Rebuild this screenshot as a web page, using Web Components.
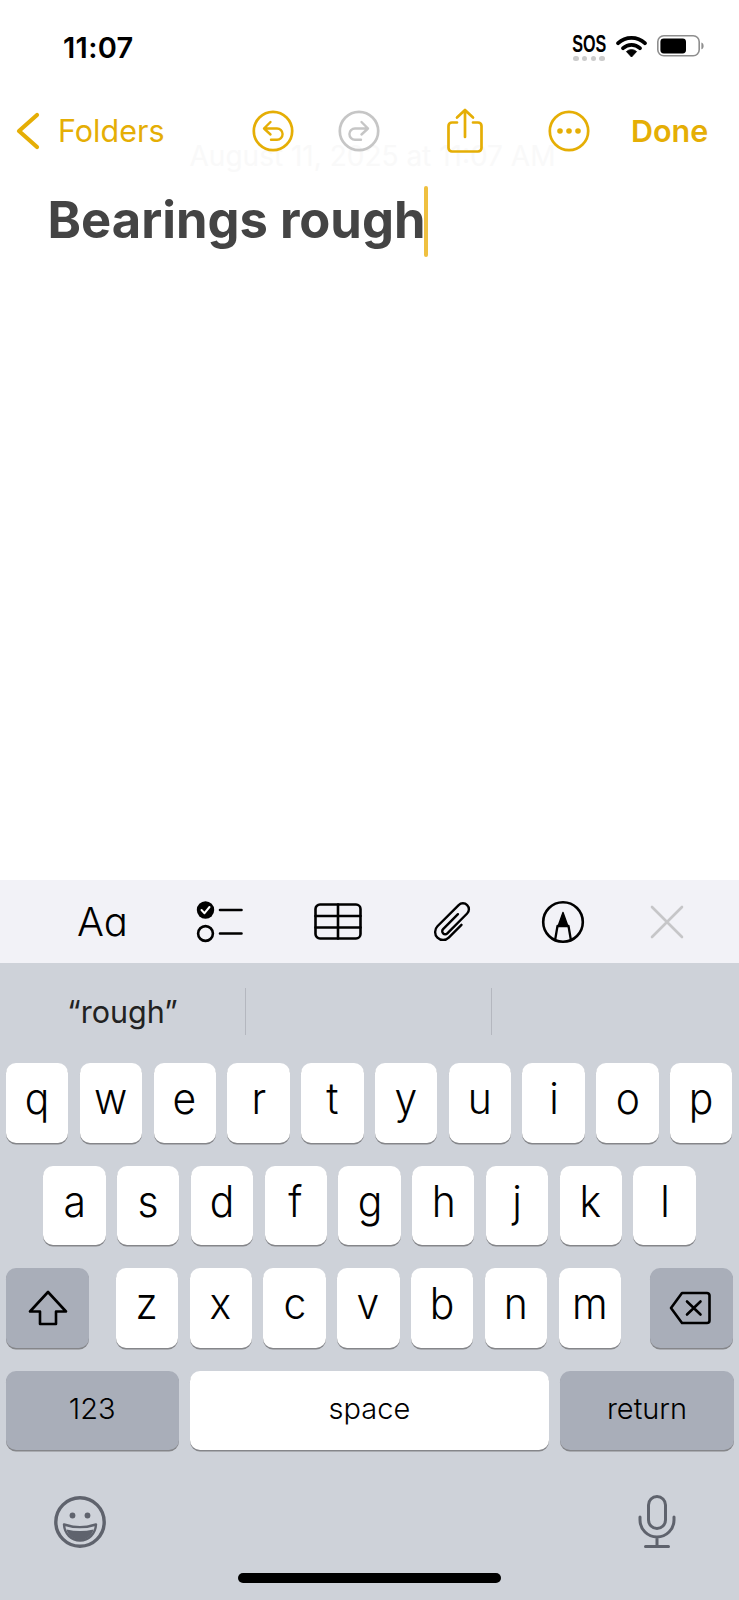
<!DOCTYPE html>
<html lang="en">
<head>
<meta charset="utf-8">
<title>Notes</title>
<style>
  html, body { margin: 0; background: #fff; }
  body { width: 739px; height: 1600px; overflow: hidden; font-family: Inter, "Liberation Sans", sans-serif; }
</style>
</head>
<body>
<notes-screen></notes-screen>

<script>
const ACCENT = '#e5ae05';

class StatusBar extends HTMLElement {
  constructor () {
    super();
    this.attachShadow({ mode: 'open' }).innerHTML = /* html */ `
    <style>
      :host { display: flex; height: 88px; box-sizing: border-box; padding: 29px 35px 0 63px; justify-content: space-between; color: #000; }
      .time { font-size: 29px; font-weight: 600; line-height: 38px; letter-spacing: .3px; }
      .right { display: flex; align-items: flex-start; margin-top: -1px; }
      .sos { width: 36px; margin: 7px 9px 0 0; display: flex; flex-direction: column; align-items: center; }
      .sos span { font: 700 23px/18px "Liberation Sans", sans-serif; transform: scaleX(.7); }
      .dots { display: flex; gap: 3.2px; margin-top: 3px; }
      .dots i { width: 5.4px; height: 5.4px; border-radius: 50%; background: #cbcbcb; }
      svg { display: block; }
    </style>
    <div class="time">11:07</div>
    <div class="right">
      <div class="sos"><span>SOS</span><div class="dots"><i></i><i></i><i></i><i></i></div></div>
      <svg width="31" height="22" viewBox="0 0 30 22" style="margin:7px 10px 0 0">
        <path d="M1.6 8.2a19.5 19.5 0 0 1 26.8 0M6.6 13.2a12.4 12.4 0 0 1 16.8 0" fill="none" stroke="#000" stroke-width="3.8" stroke-linecap="round"/>
        <path d="M15 22 10 16.6a7.4 7.4 0 0 1 10 0z" fill="#000" stroke="#000" stroke-linejoin="round"/>
      </svg>
      <svg width="47" height="22" viewBox="0 0 47 22" style="margin-top:7px">
        <rect x=".8" y=".8" width="41.4" height="20" rx="6" fill="none" stroke="#8e8e8e" stroke-width="1.6"/>
        <rect x="3.4" y="3.4" width="25.6" height="15" rx="3.4" fill="#000"/>
        <path d="M44.4 7.5c1.5.5 2.2 1.8 2.2 3.4s-.7 2.9-2.2 3.4z" fill="#8e8e8e"/>
      </svg>
    </div>`;
  }
}

class NotesNav extends HTMLElement {
  constructor () {
    super();
    this.attachShadow({ mode: 'open' }).innerHTML = /* html */ `
    <style>
      :host { display: flex; align-items: center; height: 86px; box-sizing: border-box; padding-left: 16px; color: ${ACCENT}; font-size: 30.5px; position: relative; }
      svg { display: block; flex: none; fill: none; stroke-linecap: round; stroke-linejoin: round; }
      .back { margin-right: 17px; }
      .folders { width: 106px; margin-top: -2px; }
      .done { font-weight: 600; margin-top: -2px; }
    </style>
    <svg class="back" width="25" height="40" viewBox="0 0 25 40" stroke="${ACCENT}" stroke-width="4.2"><path d="M21 4 3 20l18 16"/></svg>
    <span class="folders">Folders</span>
    <svg width="42" height="42" viewBox="0 0 42 42" stroke="${ACCENT}" stroke-width="2.7" style="margin-left:88px">
      <circle cx="21" cy="21" r="19.2"/>
      <path d="M12 18.500h13a5.600 5.600 0 0 1 0 11.200h-6M18.500 12 12 18.500l6.500 6" stroke-width="2.4"/>
    </svg>
    <svg width="42" height="42" viewBox="0 0 42 42" stroke="#c6c6c6" stroke-width="2.7" style="margin-left:44px">
      <circle cx="21" cy="21" r="19.2"/>
      <path d="M30 18.500H17a5.600 5.600 0 0 0 0 11.200h6M23.500 12l6.500 6.500-6.500 6" stroke-width="2.4"/>
    </svg>
    <svg width="36" height="46" viewBox="0 0 36 46" stroke="${ACCENT}" stroke-width="2.7" style="margin-left:67px">
      <path d="M10 14.500H5a3.500 3.500 0 0 0-3.500 3.500v22A3.500 3.500 0 0 0 5 43.500h26a3.500 3.500 0 0 0 3.500-3.500V18a3.500 3.500 0 0 0-3.500-3.500h-5M18 29V2M10 9.500 18 2l8 7.500"/>
    </svg>
    <svg width="42" height="42" viewBox="0 0 42 42" stroke="${ACCENT}" stroke-width="2.7" style="margin-left:65px">
      <circle cx="21" cy="21" r="19.2"/>
      <g fill="${ACCENT}" stroke="none"><circle cx="12" cy="21" r="2.800"/><circle cx="21" cy="21" r="2.800"/><circle cx="30" cy="21" r="2.800"/></g>
    </svg>
    <span class="done" style="margin-left:41px">Done</span>`;
  }
}

class NoteEditor extends HTMLElement {
  constructor () {
    super();
    this.attachShadow({ mode: 'open' }).innerHTML = /* html */ `
    <style>
      :host { display: block; flex: 1; min-height: 0; }
      .date { margin-top: -33px; height: 45px; padding-left: 6px; text-align: center; font-size: 28px; line-height: 30px; color: #f9f9f9; }
      .line { display: flex; align-items: center; padding-left: 47.5px; height: 71px; }
      h1 { margin: -5px 0 0; font-size: 50.7px; font-weight: 700; line-height: 71px; color: #444; white-space: nowrap; }
      .caret { width: 3.5px; height: 71px; margin-left: -1.5px; border-radius: 2px; background: #efc040; }
    </style>
    <div class="date">August 11, 2025 at 11:07 AM</div>
    <div class="line"><h1>Bearings rough</h1><div class="caret"></div></div>`;
  }
}

class FormatBar extends HTMLElement {
  constructor () {
    super();
    this.attachShadow({ mode: 'open' }).innerHTML = /* html */ `
    <style>
      :host { display: flex; align-items: center; height: 83px; flex: none; box-sizing: border-box; background: #f2f2f7; padding-left: 77px; color: #000; }
      .aa { width: 119px; font-size: 40px; font-weight: 300; line-height: 83px; font-feature-settings: "cv11"; }
      svg { display: block; flex: none; fill: none; stroke: #000; stroke-width: 2.6; stroke-linecap: round; stroke-linejoin: round; overflow: visible; }
    </style>
    <span class="aa">Aa</span>
    <svg width="46" height="44" viewBox="0 0 46 44">
      <circle cx="9.500" cy="10" r="8.700" fill="#000" stroke="none"/>
      <path d="m5.500 10 3 3.200 5-6.200" stroke="#fff" stroke-width="2"/>
      <circle cx="9.500" cy="33.500" r="7.400"/>
      <path d="M24 10h21.500M24 33.500h21.500"/>
    </svg>
    <svg width="48" height="37" viewBox="0 0 48 37" style="margin-left:72px">
      <rect x="1.500" y="1.500" width="45" height="34" rx="4.500"/>
      <path d="M24 1.500v34M1.500 13h45M1.500 24.500h45"/>
    </svg>
    <svg width="40" height="44" viewBox="-20 -22 40 44" style="margin-left:71px">
      <path transform="rotate(45)" d="M8 -4V14A8 8 0 0 1 -8 14V-16A6 6 0 0 1 4 -16V12A3 3 0 0 1 -2 12V-9" stroke-width="2.400"/>
    </svg>
    <svg width="44" height="44" viewBox="0 0 44 44" style="margin-left:67.500px">
      <circle cx="22" cy="22" r="19.800"/>
      <path d="M22 12.500 17 26.500H27z" fill="#000" stroke-width="1.500"/>
      <path d="M16.500 26 14.200 39.500M27.500 26l2.300 13.500" stroke-width="2.300"/>
    </svg>
    <svg width="34" height="34" viewBox="0 0 34 34" style="margin-left:65.500px;stroke:#c6c6c8">
      <path d="M2 2l30 30M32 2 2 32"/>
    </svg>`;
  }
}

class KbKey extends HTMLElement {
  constructor () {
    super();
    this.attachShadow({ mode: 'open' }).innerHTML = /* html */ `
    <style>
      :host { display: flex; flex: none; align-items: center; justify-content: center; box-sizing: border-box; width: 62.400px; height: 79.500px; border-radius: 10px; background: #fff; box-shadow: 0 1.500px 0 #85868a; color: #000; font-size: 43px; font-weight: 300; padding-bottom: 9px; }
      :host([fn]) { background: #a9aeb9; padding-bottom: 0; }
      :host([label]) { font-size: 29px; padding-bottom: 3px; }
      .glyph { display: inline-block; transform: scaleX(.95); }
      :host([label]) .glyph, :host([fn]) .glyph { transform: none; }
    </style>
    <span class="glyph"><slot></slot></span>`;
  }
}

class IosKeyboard extends HTMLElement {
  constructor () {
    super();
    const keys = s => s.split('').map(c => `<kb-key>${c}</kb-key>`).join('');
    this.attachShadow({ mode: 'open' }).innerHTML = /* html */ `
    <style>
      :host { display: block; flex: none; height: 637px; box-sizing: border-box; background: #ced2d9; padding: 0 6px; }
      .suggest { display: flex; height: 100px; padding-top: 25px; box-sizing: border-box; margin: 0 -6px; }
      .suggest div { width: 246px; height: 47px; font-size: 30.500px; line-height: 48px; text-align: center; color: #222; box-sizing: border-box; border-right: 1.500px solid #b4b7bf; }
      .suggest div:last-child { border: 0; }
      .row { display: flex; gap: 11.400px; height: 79.500px; margin-bottom: 23px; }
      .center { justify-content: center; }
      .shift { width: 83px; margin-right: 15.500px; }
      .del { width: 83px; margin-left: 17.500px; padding-right: 3px; }
      .bottom { display: flex; justify-content: space-between; margin: 45px 0 0 0; height: 54px; padding: 0 57px 0 48px; align-items: center; }
      .home { width: 263px; height: 10px; margin: 24px auto 0; border-radius: 5px; background: #000; }
      svg { display: block; fill: none; stroke-linecap: round; stroke-linejoin: round; }
    </style>
    <div class="suggest"><div>“rough”</div><div></div><div></div></div>
    <div class="row">${keys('qwertyuiop')}</div>
    <div class="row center">${keys('asdfghjkl')}</div>
    <div class="row">
      <kb-key fn class="shift"><svg width="40" height="36" viewBox="0 0 40 36" stroke="#000" stroke-width="2.600"><path d="M20 2 2 21.500h10V34h16V21.500h10z"/></svg></kb-key>
      ${keys('zxcvbnm')}
      <kb-key fn class="del"><svg width="42" height="34" viewBox="0 0 42 34" stroke="#000" stroke-width="2.600"><path d="M13 2h25a2.500 2.500 0 0 1 2.500 2.500v25A2.500 2.500 0 0 1 38 32H13L2 17zM18 10.500 31.500 23.500M31.500 10.500 18 23.500"/></svg></kb-key>
    </div>
    <div class="row">
      <kb-key fn label style="width:172.500px">123</kb-key>
      <kb-key label style="width:359px">space</kb-key>
      <kb-key fn label style="width:173.500px">return</kb-key>
    </div>
    <div class="bottom">
      <svg width="52" height="52" viewBox="0 0 52 52" stroke="#5f636d">
        <circle cx="26" cy="26" r="24.200" stroke-width="3.400"/>
        <circle cx="18.500" cy="19.500" r="2.900" fill="#5f636d" stroke="none"/><circle cx="33.500" cy="19.500" r="2.900" fill="#5f636d" stroke="none"/>
        <path d="M10 28.500c10.500 3.500 21.500 3.500 32 0C41.500 38 34.500 44.500 26 44.500S10.500 38 10 28.500z" stroke-width="2.400"/>
        <path d="M12.500 33.500c9 2 18 2 27 0-1.500 6-7 10.500-13.500 10.500S14 39.500 12.500 33.500z" fill="#5f636d" stroke="none"/>
      </svg>
      <svg width="38" height="54" viewBox="0 0 38 54" stroke="#5f636d" stroke-width="3">
        <rect x="10.500" y="1.500" width="17" height="32" rx="8.500"/>
        <path d="M2 22v3a17 17 0 0 0 34 0v-3M19 42v9.500M7.500 51.500h23"/>
      </svg>
    </div>
    <div class="home"></div>`;
  }
}

class NotesScreen extends HTMLElement {
  constructor () {
    super();
    this.attachShadow({ mode: 'open' }).innerHTML = /* html */ `
    <style>
      :host { display: flex; flex-direction: column; height: 1600px; width: 739px; background: #fff; }
    </style>
    <status-bar></status-bar>
    <notes-nav></notes-nav>
    <note-editor></note-editor>
    <format-bar></format-bar>
    <ios-keyboard></ios-keyboard>`;
  }
}

customElements.define('status-bar', StatusBar);
customElements.define('notes-nav', NotesNav);
customElements.define('note-editor', NoteEditor);
customElements.define('format-bar', FormatBar);
customElements.define('kb-key', KbKey);
customElements.define('ios-keyboard', IosKeyboard);
customElements.define('notes-screen', NotesScreen);
</script>
</body>
</html>
